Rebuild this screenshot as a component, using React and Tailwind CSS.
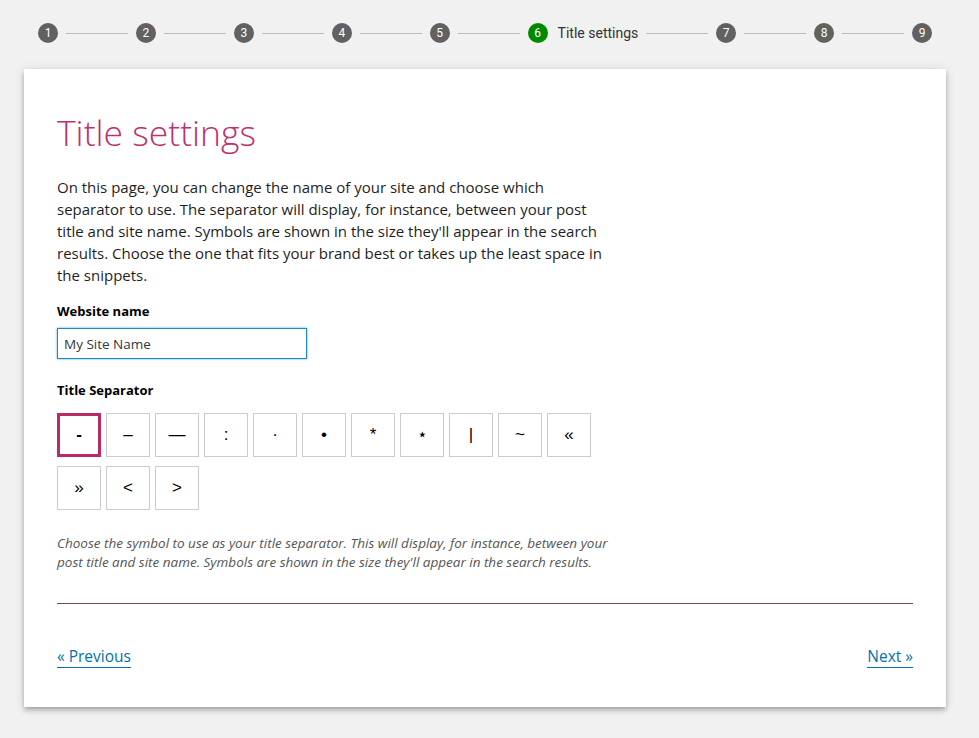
import React, { useState } from 'react';

const steps = [1, 2, 3, 4, 5, 6, 7, 8, 9];
const separators = ['-', '–', '—', ':', '·', '•', '*', '⋆', '|', '~', '«', '»', '<', '>'];

const Step = ({ n, active }) => (
  <div className="flex items-center shrink-0">
    <span
      className={`flex items-center justify-center w-[20px] h-[20px] rounded-full text-[12px] text-white ${
        active ? 'bg-[#008a00]' : 'bg-[#616161]'
      }`}
    >
      {n}
    </span>
    {active && <span className="ml-[10px] text-[14px] text-[#333]">Title settings</span>}
  </div>
);

const App = () => {
  const [selected, setSelected] = useState(0);
  const [siteName, setSiteName] = useState('My Site Name');

  return (
    <div className="min-h-[738px] bg-[#f1f1f1] pb-[31px]" style={{ fontFamily: '"Open Sans", sans-serif' }}>
      {/* stepper */}
      <div
        className="ml-[24px] w-[922px] px-[14px] h-[69px] flex items-center pb-[3px]"
        style={{ fontFamily: 'Roboto, sans-serif' }}
      >
        {steps.map((n, i) => (
          <React.Fragment key={n}>
            <Step n={n} active={n === 6} />
            {i < steps.length - 1 && <div className="flex-1 mx-[8px] h-px bg-[#bdbdbd]" />}
          </React.Fragment>
        ))}
      </div>

      {/* card */}
      <div className="ml-[24px] w-[922px] bg-white px-[33px] pt-[41px] pb-[39px] shadow-[0_2px_4px_-1px_rgba(0,0,0,0.2),0_4px_5px_0_rgba(0,0,0,0.14),0_1px_10px_0_rgba(0,0,0,0.12)]">
        <h1 className="text-[35.5px] font-light leading-[44px] text-[#c0306e]">Title settings</h1>

        <p className="mt-[22px] text-[15px] leading-[22px] text-[#1e1e1e]">
          On this page, you can change the name of your site and choose which
          <br />
          separator to use. The separator will display, for instance, between your post
          <br />
          title and site name. Symbols are shown in the size they'll appear in the search
          <br />
          results. Choose the one that fits your brand best or takes up the least space in
          <br />
          the snippets.
        </p>

        <label className="block mt-[15px] text-[13px] font-bold leading-[20px] text-black">Website name</label>
        <input
          value={siteName}
          onChange={(e) => setSiteName(e.target.value)}
          className="mt-[7px] block w-[250px] h-[31px] px-[6px] text-[13.5px] text-[#32373c] border border-[#1e8cbe] shadow-[0_0_2px_rgba(30,140,190,0.8)] outline-none"
        />

        <div className="mt-[21px] text-[13px] font-bold leading-[20px] text-black">Title Separator</div>
        <div className="mt-[13px] flex flex-wrap gap-x-[5px] gap-y-[9px] max-w-[540px]">
          {separators.map((s, i) => (
            <button
              key={i}
              onClick={() => setSelected(i)}
              style={{ fontFamily: '"Liberation Sans", Arial, sans-serif' }}
              className={`w-[44px] h-[44px] flex items-center justify-center bg-white text-[17px] text-black outline-none ${
                selected === i ? 'border-[3px] border-[#b92a6a] font-bold' : 'border border-[#ccc]'
              }`}
            >
              {s}
            </button>
          ))}
        </div>

        <p className="mt-[24px] text-[13.5px] italic leading-[19px] text-[#555]">
          Choose the symbol to use as your title separator. This will display, for instance, between your
          <br />
          post title and site name. Symbols are shown in the size they'll appear in the search results.
        </p>

        <hr className="mt-[31px] border-0 h-px bg-[#6b4a5c]" />

        <div className="mt-[42px] flex justify-between text-[15.5px] leading-[20px]">
          <a href="#" className="text-[#0073aa] border-b border-[#0073aa] pb-[1px]">
            « Previous
          </a>
          <a href="#" className="text-[#0073aa] border-b border-[#0073aa] pb-[1px]">
            Next »
          </a>
        </div>
      </div>
    </div>
  );
};

export default App;
